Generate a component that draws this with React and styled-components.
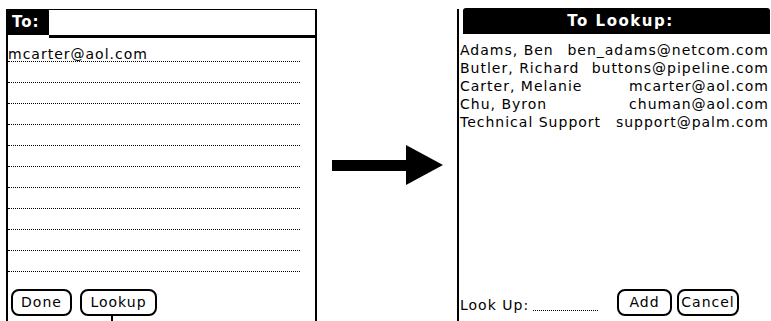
import React from "react";
import styled, { createGlobalStyle } from "styled-components";

const Global = createGlobalStyle`
  html, body { margin: 0; padding: 0; background: #fff; }
  body { font-family: "DejaVu Sans", sans-serif; color: #000; }
  * { box-sizing: border-box; }
`;

const Stage = styled.div`
  width: 771px;
  height: 321px;
  overflow: hidden;
  display: flex;
  align-items: flex-start;
  padding: 9px 0 0 6px;
  background: #fff;
`;

const Screen = styled.div`
  width: ${(p) => p.$w}px;
  height: 312px;
  display: flex;
  flex-direction: column;
  border-left: 2px solid #000;
  border-top: ${(p) => (p.$top ? "1px solid #000" : "none")};
  border-right: ${(p) => (p.$right ? "2px solid #000" : "none")};
  padding-bottom: 5px;
  font-size: 14px;
  letter-spacing: 1px;
`;

const ToHeader = styled.div`
  display: flex;
  height: 28px;
`;

const TitleTag = styled.div`
  width: 41px;
  height: 26px;
  margin-top: -1px;
  background: #000;
  color: #fff;
  font-weight: bold;
  font-size: 15px;
  line-height: 26px;
  padding-left: 4px;
  border-radius: 2px 2px 0 0;
`;

const Field = styled.div`
  flex: 1;
  border-bottom: 3px solid #000;
`;

const Lines = styled.div`
  padding-top: 3px;
  width: 292px;
`;

const Line = styled.div`
  height: 21px;
  line-height: 26px;
  border-bottom: 1px dotted #000;
  white-space: nowrap;
  overflow: visible;
`;

const ButtonRow = styled.div`
  margin-top: auto;
  display: flex;
  align-items: center;
  gap: ${(p) => p.$gap}px;
  padding-left: ${(p) => p.$pl}px;
`;

const Button = styled.div`
  position: relative;
  width: ${(p) => p.$w}px;
  height: 27px;
  border: 2px solid #000;
  border-radius: 8px;
  display: flex;
  align-items: center;
  justify-content: center;
  font-size: 14px;
  letter-spacing: 1px;
  padding-bottom: 1px;
`;

const Pointer = styled.span`
  position: absolute;
  left: 29px;
  top: 25px;
  width: 2px;
  height: 12px;
  background: #000;
`;

const ArrowCol = styled.div`
  width: 140px;
  flex: none;
  padding-top: 136px;
  display: flex;
`;

const LookupTitle = styled.div`
  height: 26px;
  margin: -1px 1px 0 4px;
  background: #000;
  color: #fff;
  font-weight: bold;
  font-size: 15px;
  letter-spacing: 1.5px;
  line-height: 26px;
  text-align: center;
  padding-left: 8px;
  border-radius: 3px 3px 0 0;
`;

const List = styled.div`
  padding: 7px 2px 0 1px;
`;

const ListRow = styled.div`
  display: flex;
  justify-content: space-between;
  height: 18px;
  line-height: 18px;
  white-space: nowrap;
`;

const LookLabel = styled.div`
  display: flex;
  align-items: flex-end;
  height: 27px;
  padding-left: 1px;
  padding-bottom: 3px;
  width: 153px;
  flex: none;
`;

const LookDots = styled.span`
  display: inline-block;
  width: 65px;
  margin-left: 4px;
  margin-bottom: 2px;
  border-bottom: 1px dotted #000;
`;

const entries = [
  ["Adams, Ben", "ben_adams@netcom.com"],
  ["Butler, Richard", "buttons@pipeline.com"],
  ["Carter, Melanie", "mcarter@aol.com"],
  ["Chu, Byron", "chuman@aol.com"],
  ["Technical Support", "support@palm.com"],
];

export default function App() {
  const lines = ["mcarter@aol.com", "", "", "", "", "", "", "", "", "", ""];
  return (
    <>
      <Global />
      <Stage>
        <Screen $w={311} $top $right>
          <ToHeader>
            <TitleTag>To:</TitleTag>
            <Field />
          </ToHeader>
          <Lines>
            {lines.map((t, i) => (
              <Line key={i}>{t}</Line>
            ))}
          </Lines>
          <ButtonRow $gap={8} $pl={3}>
            <Button $w={61}>Done</Button>
            <Button $w={77}>
              Lookup
              <Pointer />
            </Button>
          </ButtonRow>
        </Screen>
        <ArrowCol>
          <svg width="140" height="40" viewBox="0 0 140 40">
            <rect x="15" y="15" width="76" height="11" fill="#000" />
            <polygon points="89,0 126,20 89,40" fill="#000" />
          </svg>
        </ArrowCol>
        <Screen $w={314}>
          <LookupTitle>To Lookup:</LookupTitle>
          <List>
            {entries.map(([n, e]) => (
              <ListRow key={n}>
                <span>{n}</span>
                <span>{e}</span>
              </ListRow>
            ))}
          </List>
          <ButtonRow $gap={5} $pl={0}>
            <LookLabel>
              Look Up:<LookDots />
            </LookLabel>
            <Button $w={55}>Add</Button>
            <Button $w={62}>Cancel</Button>
          </ButtonRow>
        </Screen>
      </Stage>
    </>
  );
}
